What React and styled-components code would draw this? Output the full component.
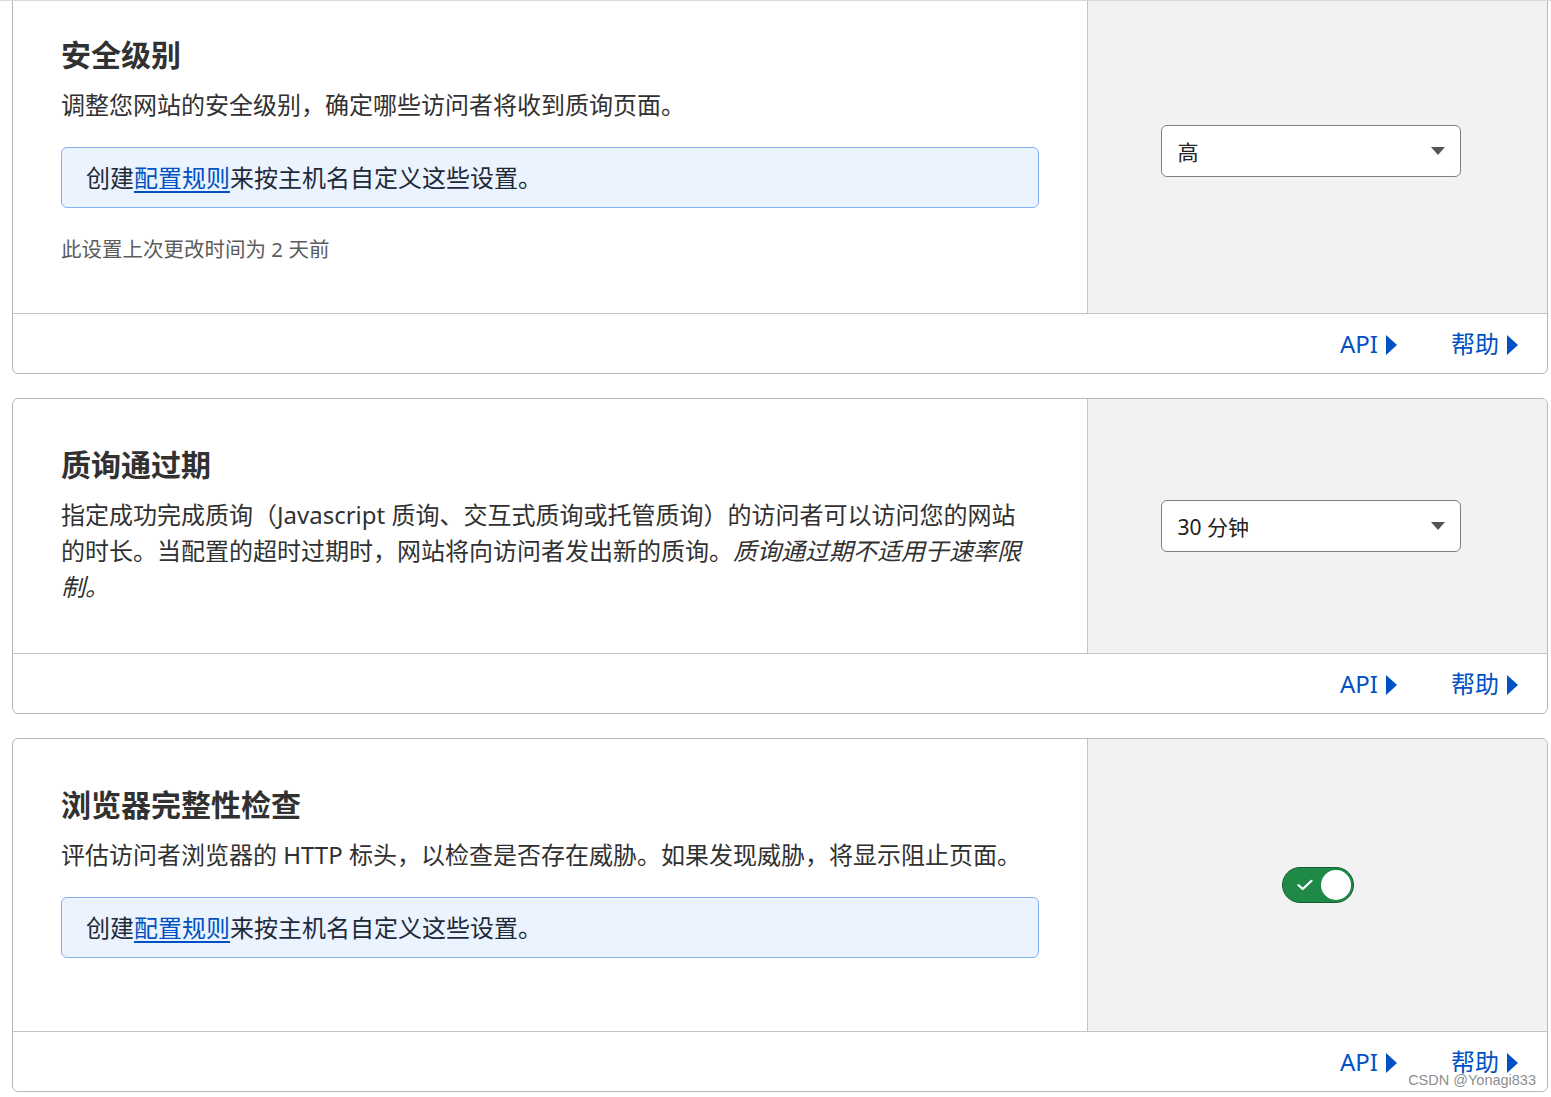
import styled, { createGlobalStyle } from "styled-components";

const GlobalStyle = createGlobalStyle`
  html, body {
    margin: 0;
    padding: 0;
    background: #ffffff;
  }
  body {
    font-family: "Noto Sans", "Noto Sans CJK SC", sans-serif;
    color: #313131;
  }
`;

const Page = styled.div`
  position: relative;
  height: 1097px;
  box-sizing: border-box;
  border-top: 1px solid #d9d9d9;
  padding: 0 3px 0 12px;
  overflow: hidden;
  display: flex;
  flex-direction: column;
  gap: 24px;
`;

const Card = styled.section`
  border: 1px solid #b9b9b9;
  border-radius: 6px;
  background: #ffffff;
  display: flex;
  flex-direction: column;
  overflow: hidden;
  flex-shrink: 0;
  &:first-child {
    margin-top: -13px;
  }
`;

const MainRow = styled.div`
  display: flex;
`;

const Content = styled.div`
  flex: 1;
  padding: 48px;
  min-width: 0;
`;

const Control = styled.div`
  width: 459px;
  flex-shrink: 0;
  background: #f2f2f2;
  border-left: 1px solid #c4c4c4;
  display: flex;
  align-items: center;
  justify-content: center;
`;

const Title = styled.h2`
  margin: 0 0 14px;
  font-size: 30px;
  line-height: 36px;
  font-weight: 700;
  color: #313131;
`;

const Desc = styled.p`
  margin: 0;
  font-size: 24px;
  line-height: 36px;
  color: #313131;
  em {
    font-style: italic;
  }
`;

const InfoBox = styled.div`
  margin: 24px 0 25px;
  padding: 12px 24px 11px;
  border: 1px solid #86b0f2;
  border-radius: 6px;
  background: #ebf3fe;
  font-size: 24px;
  line-height: 36px;
  color: #1e2a3a;
`;

const RuleLink = styled.a`
  color: #0051c3;
  text-decoration: underline;
  text-decoration-thickness: 2px;
  text-underline-offset: 4px;
`;

const Meta = styled.div`
  font-size: 20.5px;
  line-height: 32px;
  color: #5c5c5c;
`;

const Select = styled.div`
  width: 300px;
  height: 52px;
  box-sizing: border-box;
  margin-left: -14px;
  padding: 0 16px;
  border: 1px solid #808080;
  border-radius: 6px;
  background: #ffffff;
  display: flex;
  align-items: center;
  justify-content: space-between;
  font-size: 21px;
  color: #222222;
`;

const Caret = styled.span`
  width: 0;
  height: 0;
  border-left: 7px solid transparent;
  border-right: 7px solid transparent;
  border-top: 8px solid #555555;
  margin-right: -1px;
`;

const Toggle = styled.div`
  width: 72px;
  height: 36px;
  box-sizing: border-box;
  border-radius: 18px;
  border: 1px solid #165c32;
  background: #1f8a48;
  display: flex;
  align-items: center;
  justify-content: space-between;
  padding: 0 2px 0 14px;
`;

const Knob = styled.span`
  width: 30px;
  height: 30px;
  border-radius: 50%;
  background: #ffffff;
`;

const Footer = styled.div`
  height: 59px;
  border-top: 1px solid #c4c4c4;
  display: flex;
  align-items: center;
  justify-content: flex-end;
  gap: 54px;
  padding: 0 29px 0 0;
`;

const FooterLink = styled.a`
  display: flex;
  align-items: center;
  gap: 8px;
  font-size: 24px;
  line-height: 36px;
  color: #0051c3;
  text-decoration: none;
`;

const Arrow = styled.span`
  width: 0;
  height: 0;
  border-top: 10px solid transparent;
  border-bottom: 10px solid transparent;
  border-left: 11px solid #0051c3;
  margin-top: 2px;
`;

const Watermark = styled.div`
  position: absolute;
  right: 15px;
  bottom: 9px;
  font-family: "Liberation Sans", Arial, sans-serif;
  font-size: 14.5px;
  color: rgba(110, 110, 110, 0.8);
`;

const Links = () => (
  <Footer>
    <FooterLink>
      API
      <Arrow />
    </FooterLink>
    <FooterLink>
      帮助
      <Arrow />
    </FooterLink>
  </Footer>
);

const RuleHint = () => (
  <InfoBox>
    创建<RuleLink>配置规则</RuleLink>来按主机名自定义这些设置。
  </InfoBox>
);

const App = () => {
  return (
    <>
      <GlobalStyle />
      <Page>
        <Card>
          <MainRow>
            <Content>
              <Title>安全级别</Title>
              <Desc>调整您网站的安全级别，确定哪些访问者将收到质询页面。</Desc>
              <RuleHint />
              <Meta>此设置上次更改时间为 2 天前</Meta>
            </Content>
            <Control>
              <Select>
                <span>高</span>
                <Caret />
              </Select>
            </Control>
          </MainRow>
          <Links />
        </Card>

        <Card>
          <MainRow>
            <Content>
              <Title>质询通过期</Title>
              <Desc>
                指定成功完成质询（Javascript 质询、交互式质询或托管质询）的访问者可以访问您的网站的时长。当配置的超时过期时，网站将向访问者发出新的质询。
                <em>质询通过期不适用于速率限制。</em>
              </Desc>
            </Content>
            <Control>
              <Select>
                <span>30 分钟</span>
                <Caret />
              </Select>
            </Control>
          </MainRow>
          <Links />
        </Card>

        <Card>
          <MainRow>
            <Content>
              <Title>浏览器完整性检查</Title>
              <Desc>评估访问者浏览器的 HTTP 标头，以检查是否存在威胁。如果发现威胁，将显示阻止页面。</Desc>
              <RuleHint />
            </Content>
            <Control>
              <Toggle>
                <svg width="16" height="12" viewBox="0 0 16 12">
                  <path d="M1.5 6.2 L5.8 10 L14.5 1.8" fill="none" stroke="#ffffff" strokeWidth="2.2" strokeLinecap="round" strokeLinejoin="round" />
                </svg>
                <Knob />
              </Toggle>
            </Control>
          </MainRow>
          <Links />
        </Card>
        <Watermark>CSDN @Yonagi833</Watermark>
      </Page>
    </>
  );
};

export default App;
